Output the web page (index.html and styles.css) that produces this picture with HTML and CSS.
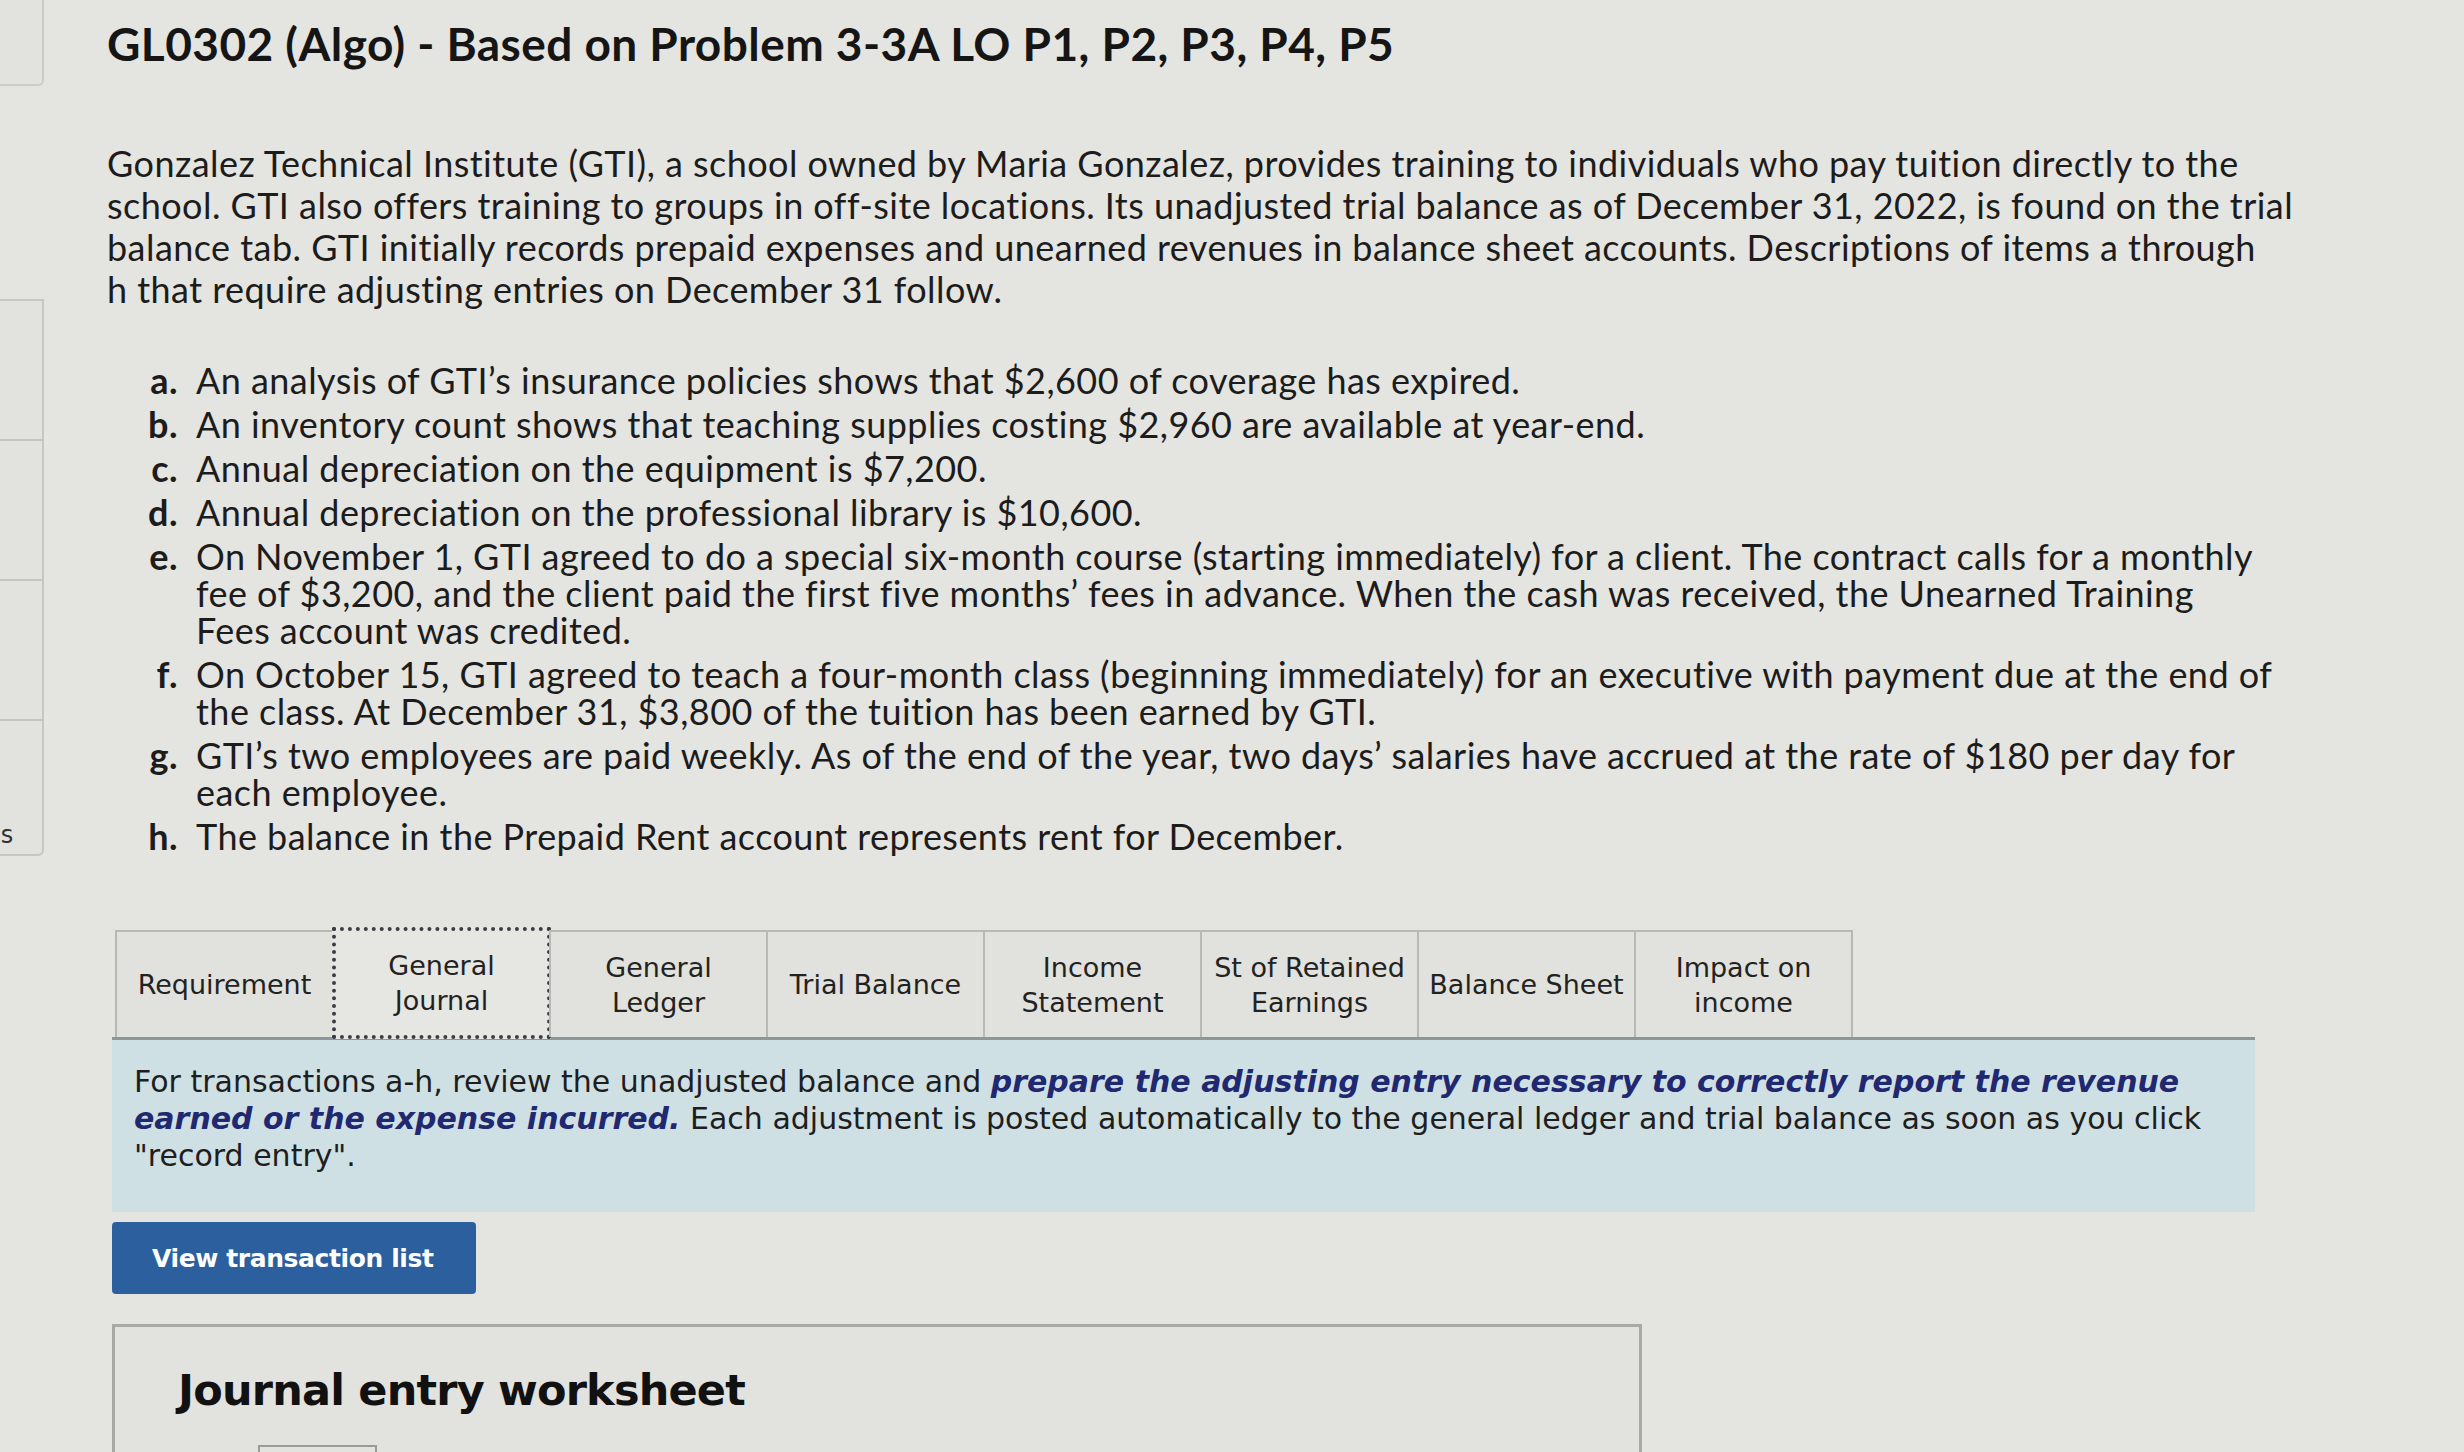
FILE: index.html
```html
<!DOCTYPE html>
<html lang="en">
<head>
<meta charset="utf-8">
<title>GL0302 (Algo) - Based on Problem 3-3A</title>
<link rel="stylesheet" href="styles.css">
</head>
<body>
<div class="page">
  <aside class="side">
    <div class="side-top"></div>
    <div class="side-panel">
      <div class="side-cell"></div>
      <div class="side-cell"></div>
      <div class="side-cell"></div>
      <div class="side-cell last"><span class="side-label">es</span></div>
    </div>
  </aside>
  <main class="main">
    <h1 class="title">GL0302 (Algo) - Based on Problem 3-3A LO P1, P2, P3, P4, P5</h1>
    <p class="intro">Gonzalez Technical Institute (GTI), a school owned by Maria Gonzalez, provides training to individuals who pay tuition directly to the school. GTI also offers training to groups in off-site locations. Its unadjusted trial balance as of December 31, 2022, is found on the trial balance tab. GTI initially records prepaid expenses and unearned revenues in balance sheet accounts. Descriptions of items a through h&nbsp;that require adjusting entries on December 31 follow.</p>
    <ul class="items">
      <li class="item"><span class="lbl">a.</span><span class="txt">An analysis of GTI’s insurance policies shows that $2,600 of coverage has expired.</span></li>
      <li class="item"><span class="lbl">b.</span><span class="txt">An inventory count shows that teaching supplies costing $2,960 are available at year-end.</span></li>
      <li class="item"><span class="lbl">c.</span><span class="txt">Annual depreciation on the equipment is $7,200.</span></li>
      <li class="item"><span class="lbl">d.</span><span class="txt">Annual depreciation on the professional library is $10,600.</span></li>
      <li class="item"><span class="lbl">e.</span><span class="txt">On November 1, GTI agreed to do a special six-month course (starting immediately) for a client. The contract calls for a monthly fee of $3,200, and the client paid the first five months’ fees in advance. When the cash was received, the Unearned Training Fees&nbsp;account was credited.</span></li>
      <li class="item"><span class="lbl">f.</span><span class="txt">On October 15, GTI agreed to teach a four-month class (beginning immediately) for an executive with payment due at the end of the class. At December 31, $3,800 of the tuition has been earned by GTI.</span></li>
      <li class="item"><span class="lbl">g.</span><span class="txt">GTI’s two employees are paid weekly. As of the end of the year, two days’ salaries have accrued at the rate of $180 per day for each employee.</span></li>
      <li class="item"><span class="lbl">h.</span><span class="txt">The balance in the Prepaid Rent account represents rent for December.</span></li>
    </ul>

    <section class="work">
      <div class="tabs">
        <div class="tab">Requirement</div>
        <div class="tab active">General<br>Journal</div>
        <div class="tab">General<br>Ledger</div>
        <div class="tab">Trial Balance</div>
        <div class="tab">Income<br>Statement</div>
        <div class="tab">St of Retained<br>Earnings</div>
        <div class="tab">Balance Sheet</div>
        <div class="tab">Impact on<br>income</div>
      </div>
      <div class="instructions">For transactions a-h, review the unadjusted balance and <strong class="em">prepare the adjusting entry necessary to correctly report the revenue earned or the expense incurred.</strong> Each adjustment is posted automatically to the general ledger and trial balance as soon as you click "record entry".</div>
      <button class="btn" type="button">View transaction list</button>
      <div class="journal">
        <h2 class="journal-title">Journal entry worksheet</h2>
        <div class="journal-nav"></div>
      </div>
    </section>
  </main>
</div>
</body>
</html>
```
FILE: styles.css
```css
html, body {
  margin: 0;
  padding: 0;
  background: #e4e4e1;
  height: 1452px;
  overflow: hidden;
}
.page {
  display: flex;
  align-items: flex-start;
  color: #1d1d1d;
}
.side {
  width: 44px;
  flex: none;
  display: flex;
  flex-direction: column;
}
.side-top {
  height: 86px;
  border: 2px solid #cbcbc8;
  border-left: none;
  border-top: none;
  border-bottom-right-radius: 6px;
  box-sizing: border-box;
  background: #e2e2df;
}
.side-panel {
  margin-top: 213px;
  width: 42px;
  border: 2px solid #c6c6c3;
  border-left: none;
  border-bottom-right-radius: 6px;
  background: #e2e2df;
  overflow: hidden;
}
.side-cell {
  height: 140px;
  border-bottom: 2px solid #c6c6c3;
  box-sizing: border-box;
  position: relative;
}
.side-cell.last {
  height: 133px;
  border-bottom: none;
}
.side-label {
  position: absolute;
  left: -14px;
  top: 100px;
  font-family: "DejaVu Sans", Verdana, sans-serif;
  font-size: 24px;
  line-height: 28px;
  color: #333;
}
.main {
  margin-left: 63px;
  width: 2280px;
  flex: none;
}
.title {
  margin: 20px 0 0;
  font-family: Lato, "Open Sans", sans-serif;
  font-weight: 700;
  font-size: 46px;
  line-height: 48px;
  color: #151515;
  letter-spacing: 0.45px;
}
.intro {
  margin: 74px 0 0;
  width: 2198px;
  font-family: Lato, "Open Sans", sans-serif;
  font-size: 36px;
  letter-spacing: 0.45px;
  line-height: 42px;
  color: #1c1c1c;
}
.items {
  list-style: none;
  margin: 52px 0 0;
  padding: 0;
  font-family: Lato, "Open Sans", sans-serif;
  font-size: 36px;
  letter-spacing: 0.45px;
  line-height: 37px;
  color: #1c1c1c;
  display: flex;
  flex-direction: column;
  gap: 7px;
}
.item {
  display: grid;
  grid-template-columns: 71px 2092px;
  column-gap: 18px;
}
.lbl {
  font-weight: 700;
  text-align: right;
}
.work {
  margin-top: 75px;
  margin-left: 5px;
}
.tabs {
  display: flex;
  margin-left: 3px;
  height: 107px;
  position: relative;
  z-index: 1;
}
.tab {
  width: 219px;
  box-sizing: border-box;
  border: 2px solid #b8b8b4;
  border-bottom: none;
  margin-right: -2px;
  background: #e1e1dd;
  display: flex;
  align-items: center;
  justify-content: center;
  text-align: center;
  font-family: "DejaVu Sans", Verdana, sans-serif;
  font-size: 27px;
  line-height: 35px;
  color: #222;
}
.tab.active {
  border: 4px dotted #3c3c48;
  background: #e6e6e2;
  height: 112px;
  margin-top: -3px;
}
.instructions {
  width: 2143px;
  box-sizing: border-box;
  border-top: 3px solid #8d979b;
  background: #cfe0e5;
  padding: 23px 30px 38px 22px;
  font-family: "DejaVu Sans", Verdana, sans-serif;
  font-size: 30px;
  line-height: 37px;
  color: #1e1e1e;
}
.em {
  font-style: italic;
  font-weight: 700;
  color: #1f2870;
}
.btn {
  display: block;
  margin-top: 10px;
  width: 364px;
  height: 72px;
  border: none;
  border-radius: 4px;
  background: #2b5f9e;
  color: #fff;
  font-family: "DejaVu Sans", Verdana, sans-serif;
  font-weight: 700;
  font-size: 25px;
  letter-spacing: -0.4px;
  text-align: left;
  padding: 0 0 0 40px;
}
.journal {
  margin-top: 30px;
  width: 1530px;
  height: 128px;
  box-sizing: border-box;
  border: 3px solid #a9a9a6;
  border-bottom: none;
  background: #e2e2df;
  padding: 41px 0 0 63px;
  overflow: hidden;
}
.journal-title {
  margin: 0;
  font-family: "DejaVu Sans", Verdana, sans-serif;
  font-weight: 700;
  font-size: 43px;
  line-height: 44px;
  letter-spacing: -0.8px;
  color: #111;
}
.journal-nav {
  margin: 33px 0 0 80px;
  width: 115px;
  height: 6px;
  border: 2px solid #9a9a97;
  border-bottom: none;
}
```
